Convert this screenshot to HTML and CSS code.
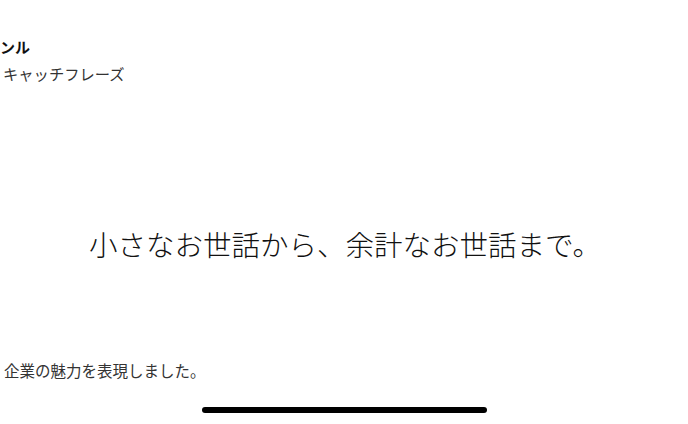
FILE: index.html
```html
<!DOCTYPE html>
<html lang="ja">
<head>
<meta charset="utf-8">
<link rel="stylesheet" href="styles.css">
</head>
<body>
<div class="screen">
  <div class="head">
    <div class="title">ンル</div>
    <div class="sub">キャッチフレーズ</div>
  </div>
  <div class="main">
    <p class="catch">小さなお世話から、余計なお世話まで。</p>
  </div>
  <div class="desc">企業の魅力を表現しました。</div>
  <div class="home-wrap"><div class="home"></div></div>
</div>
</body>
</html>
```
FILE: styles.css
```css
html, body {
  margin: 0;
  padding: 0;
  background: #fff;
}
.screen {
  width: 688px;
  height: 424px;
  display: flex;
  flex-direction: column;
  font-family: "Noto Sans CJK JP", "Noto Sans", sans-serif;
  color: #1a1a1a;
  overflow: hidden;
}
.head {
  padding-top: 37px;
}
.title {
  font-size: 15px;
  font-weight: 700;
  line-height: 20px;
  color: #111;
}
.sub {
  margin-top: 6px;
  font-size: 15.3px;
  line-height: 20px;
  padding-left: 3px;
  color: #333;
}
.main {
  flex: 1;
  display: flex;
  align-items: center;
  justify-content: center;
}
.catch {
  margin: 0;
  font-size: 28.5px;
  font-weight: 300;
  line-height: 36px;
  color: #111;
  padding-top: 44px;
  padding-left: 2px;
}
.desc {
  font-size: 15.5px;
  line-height: 20px;
  padding-left: 4px;
  margin-bottom: 16px;
  color: #333;
}
.home-wrap {
  height: 28px;
  display: flex;
  justify-content: center;
  align-items: center;
}
.home {
  width: 285px;
  height: 6px;
  border-radius: 3px;
  background: #000;
}
```
